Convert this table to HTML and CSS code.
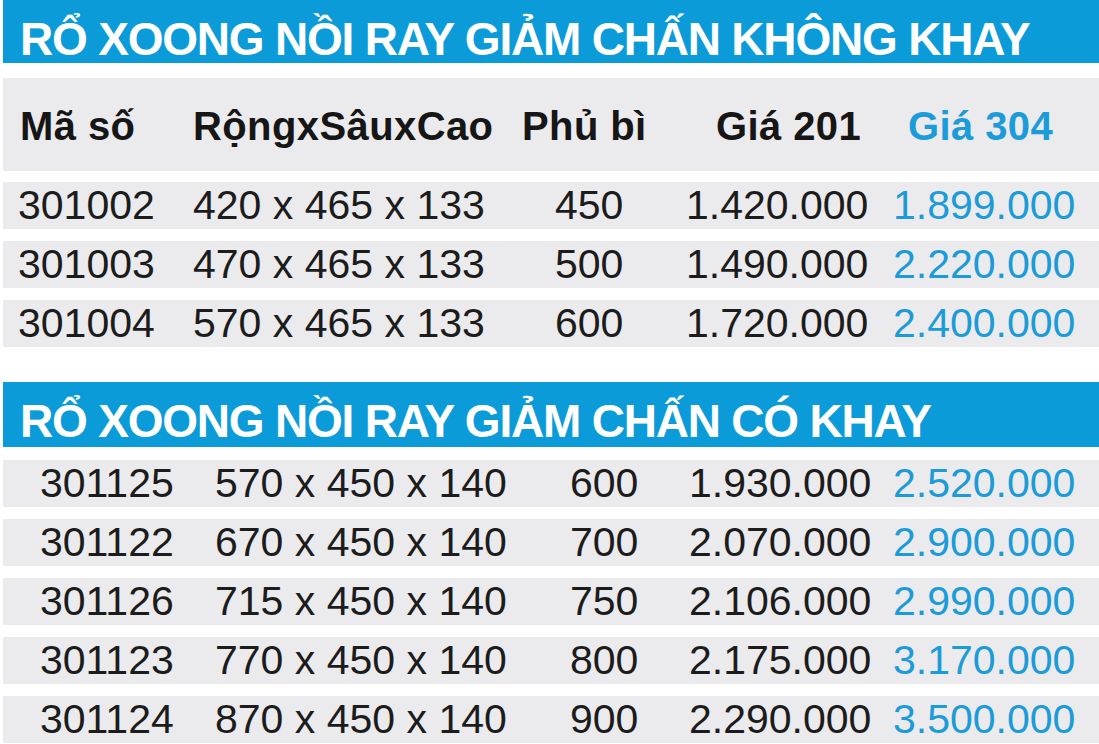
FILE: index.html
```html
<!DOCTYPE html>
<html lang="vi">
<head>
<meta charset="utf-8">
<title>Bảng giá rổ xoong nồi</title>
<link rel="stylesheet" href="styles.css">
</head>
<body>
<div class="page">
  <section class="sec sec-a">
    <h1 class="bar">RỔ XOONG NỒI RAY GIẢM CHẤN KHÔNG KHAY</h1>
    <div class="head">
      <span>Mã số</span>
      <span>RộngxSâuxCao</span>
      <span>Phủ bì</span>
      <span>Giá 201</span>
      <span class="blue">Giá 304</span>
    </div>
    <div class="rows">
      <div class="row"><span>301002</span><span>420 x 465 x 133</span><span>450</span><span>1.420.000</span><span class="blue">1.899.000</span></div>
      <div class="row"><span>301003</span><span>470 x 465 x 133</span><span>500</span><span>1.490.000</span><span class="blue">2.220.000</span></div>
      <div class="row"><span>301004</span><span>570 x 465 x 133</span><span>600</span><span>1.720.000</span><span class="blue">2.400.000</span></div>
    </div>
  </section>
  <section class="sec sec-b">
    <h1 class="bar bar-b">RỔ XOONG NỒI RAY GIẢM CHẤN CÓ KHAY</h1>
    <div class="rows">
      <div class="row"><span>301125</span><span>570 x 450 x 140</span><span>600</span><span>1.930.000</span><span class="blue">2.520.000</span></div>
      <div class="row"><span>301122</span><span>670 x 450 x 140</span><span>700</span><span>2.070.000</span><span class="blue">2.900.000</span></div>
      <div class="row"><span>301126</span><span>715 x 450 x 140</span><span>750</span><span>2.106.000</span><span class="blue">2.990.000</span></div>
      <div class="row"><span>301123</span><span>770 x 450 x 140</span><span>800</span><span>2.175.000</span><span class="blue">3.170.000</span></div>
      <div class="row"><span>301124</span><span>870 x 450 x 140</span><span>900</span><span>2.290.000</span><span class="blue">3.500.000</span></div>
    </div>
  </section>
</div>
</body>
</html>
```

FILE: styles.css
```css
html, body {
  margin: 0;
  padding: 0;
  background: #ffffff;
}
body {
  font-family: "Liberation Sans", Arial, sans-serif;
  color: #1c1c1c;
  width: 1099px;
  height: 744px;
  overflow: hidden;
}
.page {
  padding-left: 3px;
}
.sec {
  display: flex;
  flex-direction: column;
}
.bar {
  margin: 0;
  height: 63px;
  box-sizing: border-box;
  padding: 15px 0 0 17px;
  line-height: 48px;
  font-size: 46px;
  font-weight: bold;
  letter-spacing: -1.2px;
  color: #ffffff;
  background: #0b9bd9;
  white-space: nowrap;
}
.bar-b {
  height: 65px;
}
.head {
  margin-top: 15px;
  height: 93px;
  box-sizing: border-box;
  padding: 4px 0 0 17px;
  line-height: 89px;
  font-size: 40px;
  font-weight: bold;
  letter-spacing: 0.4px;
  color: #161616;
  background: #ebebed;
  display: grid;
  grid-template-columns: 173px 329px 194px 192px 1fr;
  white-space: nowrap;
}
.rows {
  display: flex;
  flex-direction: column;
  gap: 12px;
}
.sec-a .rows {
  margin-top: 11px;
}
.sec-b {
  margin-top: 35px;
}
.sec-b .rows {
  margin-top: 13px;
}
.row {
  height: 47px;
  line-height: 47px;
  font-size: 41px;
  background: #ebebed;
  display: grid;
  white-space: nowrap;
}
.sec-a .row {
  padding-left: 15px;
  grid-template-columns: 175px 362px 131px 207px 1fr;
}
.sec-b .row {
  padding-left: 37px;
  grid-template-columns: 175px 355px 119px 204px 1fr;
}
.blue {
  color: #1b9bd8;
}
```
